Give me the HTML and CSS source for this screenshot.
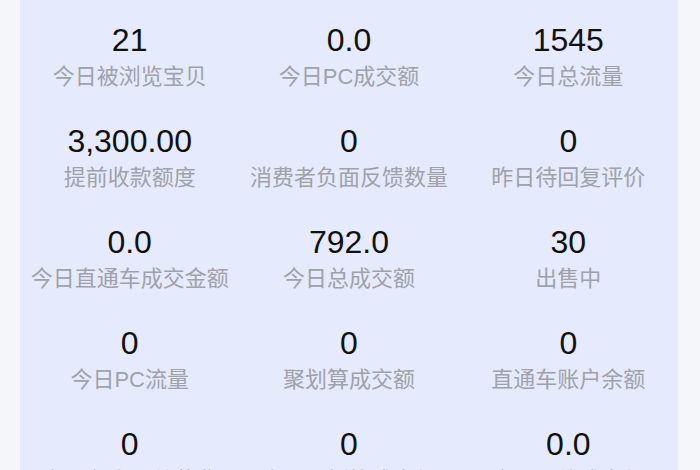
FILE: index.html
```html
<!DOCTYPE html>
<html lang="zh-CN">
<head>
<meta charset="utf-8">
<title>数据</title>
<link rel="stylesheet" href="styles.css">
</head>
<body>
<div class="page">
  <div class="panel">
    <div class="cell"><div class="num">21</div><div class="label">今日被浏览宝贝</div></div>
    <div class="cell"><div class="num">0.0</div><div class="label">今日PC成交额</div></div>
    <div class="cell"><div class="num">1545</div><div class="label">今日总流量</div></div>
    <div class="cell"><div class="num">3,300.00</div><div class="label">提前收款额度</div></div>
    <div class="cell"><div class="num">0</div><div class="label">消费者负面反馈数量</div></div>
    <div class="cell"><div class="num">0</div><div class="label">昨日待回复评价</div></div>
    <div class="cell"><div class="num">0.0</div><div class="label">今日直通车成交金额</div></div>
    <div class="cell"><div class="num">792.0</div><div class="label">今日总成交额</div></div>
    <div class="cell"><div class="num">30</div><div class="label">出售中</div></div>
    <div class="cell"><div class="num">0</div><div class="label">今日PC流量</div></div>
    <div class="cell"><div class="num">0</div><div class="label">聚划算成交额</div></div>
    <div class="cell"><div class="num">0</div><div class="label">直通车账户余额</div></div>
    <div class="cell"><div class="num">0</div><div class="label">直通车今日总花费</div></div>
    <div class="cell"><div class="num">0</div><div class="label">今日聚划算成交额</div></div>
    <div class="cell"><div class="num">0.0</div><div class="label">今日无线成交额</div></div>
  </div>
</div>
</body>
</html>
```
FILE: styles.css
```css
html, body {
  margin: 0;
  padding: 0;
  background: #f5f6fa;
  overflow: hidden;
}
.page {
  width: 700px;
  height: 470px;
  padding: 0 22px 0 20px;
  box-sizing: border-box;
  overflow: hidden;
}
.panel {
  background: #e5eafc;
  display: grid;
  grid-template-columns: repeat(3, 1fr);
  align-content: start;
  row-gap: 28px;
  padding: 20px 0 40px;
}
.cell {
  display: flex;
  flex-direction: column;
  align-items: center;
}
.num {
  font-family: "Liberation Sans", Arial, sans-serif;
  font-size: 32px;
  line-height: 40px;
  height: 40px;
  color: #111111;
}
.label {
  font-family: "Liberation Sans", "Noto Sans CJK SC", sans-serif;
  font-size: 22px;
  line-height: 33px;
  height: 33px;
  color: #9fa2aa;
  white-space: nowrap;
}
```
